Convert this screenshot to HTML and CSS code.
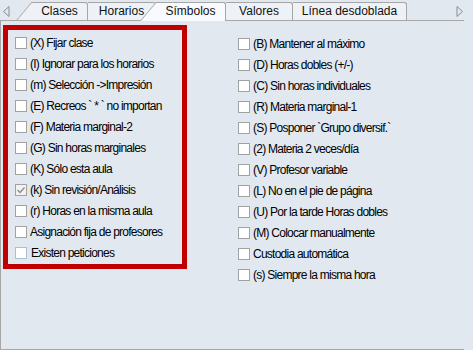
FILE: index.html
```html
<!DOCTYPE html>
<html>
<head>
	<title>Símbolos</title>
<link rel="stylesheet" href="styles.css">
</head>
<body>
	<div class="tabs">
		<span class="arrow arrow-left">
			<svg width="7" height="11"><polygon points="6,0.5 0.5,5.5 6,10.5" fill="none" stroke="#8c8c8c"/></svg>
		</span>
		<div class="tab tab-first tab-clases">Clases</div>
		<div class="tab tab-horarios">Horarios</div>
		<div class="tab tab-active tab-simbolos">Símbolos</div>
		<div class="tab tab-valores">Valores</div>
		<div class="tab tab-linea">Línea desdoblada</div>
		<span class="arrow arrow-right">
			<svg width="7" height="11"><polygon points="1,0.5 6.5,5.5 1,10.5" fill="none" stroke="#8c8c8c"/></svg>
		</span>
	</div>

	<div class="panel">
		<ul class="opts marked">
			<li><span class="box"></span>(X) Fijar clase</li>
			<li><span class="box"></span>(I) Ignorar para los horarios</li>
			<li><span class="box"></span>(m) Selección -&gt;Impresión</li>
			<li><span class="box"></span>(E) Recreos ` * ` no importan</li>
			<li><span class="box"></span>(F) Materia marginal-2</li>
			<li><span class="box"></span>(G) Sin horas marginales</li>
			<li><span class="box"></span>(K) Sólo esta aula</li>
			<li><span class="box checked"><svg width="10" height="10"><polyline points="1.5,5 4,7.5 8.5,2.5" fill="none" stroke="#8e8e8e" stroke-width="1.4"/></svg></span>(k) Sin revisión/Análisis</li>
			<li><span class="box"></span>(r) Horas en la misma aula</li>
			<li><span class="box"></span>Asignación fija de profesores</li>
			<li><span class="box hover"></span><span class="shift">Existen peticiones</span></li>
		</ul>
		<ul class="opts right">
			<li><span class="box"></span>(B) Mantener al máximo</li>
			<li><span class="box"></span>(D) Horas dobles (+/-)</li>
			<li><span class="box"></span>(C) Sin horas individuales</li>
			<li><span class="box"></span>(R) Materia marginal-1</li>
			<li><span class="box"></span>(S) Posponer `Grupo diversif.`</li>
			<li><span class="box"></span>(2) Materia 2 veces/día</li>
			<li><span class="box"></span>(V) Profesor variable</li>
			<li><span class="box"></span>(L) No en el pie de página</li>
			<li><span class="box"></span>(U) Por la tarde Horas dobles</li>
			<li><span class="box"></span>(M) Colocar manualmente</li>
			<li><span class="box"></span>Custodia automática</li>
			<li><span class="box"></span>(s) Siempre la misma hora</li>
		</ul>
	</div>
</body>
</html>
```

FILE: styles.css
```css
body{
	margin: 0;
	background-color: #e2e8f0;
	font-family: "Liberation Sans", Arial, sans-serif;
	color: #000;
}
.tabs{
	display: flex;
	align-items: flex-end;
	width: 464px;
	height: 21px;
	box-sizing: border-box;
	border-bottom: 1px solid #a6a6a6;
}
.arrow{
	display: flex;
	margin-bottom: 3px;
}
.arrow-left{
	margin-left: 3px;
}
.arrow-right{
	margin-left: auto;
	margin-right: 1px;
}
.tab{
	position: relative;
	z-index: 1;
	height: 18px;
	box-sizing: border-box;
	border-top: 1px solid #a6a6a6;
	border-right: 1px solid #a6a6a6;
	border-top-right-radius: 3px;
	background-color: #eef2f7;
	font-size: 12px;
	line-height: 17px;
	text-align: center;
	color: #111;
}
.tab-first{
	margin-left: 22px;
}
.tab-first::before,
.tab-active::before{
	content: "";
	position: absolute;
	top: -1px;
	bottom: 0;
	left: -8px;
	width: 16px;
	background: inherit;
	border-left: 1px solid #a6a6a6;
	border-top: 1px solid #a6a6a6;
	transform: skewX(-40deg);
	z-index: -1;
}
.tab-active{
	z-index: 2;
	height: 19px;
	margin-bottom: -1px;
	background-color: #f8fafd;
}
.tab-clases{ width: 56px; }
.tab-horarios{ width: 68px; }
.tab-simbolos{ width: 70px; }
.tab-valores{ width: 67px; }
.tab-linea{ width: 114px; }

.panel{
	display: flex;
	align-items: flex-start;
	width: 464px;
	height: 329px;
	box-sizing: border-box;
	border-left: 1px solid #a6a6a6;
	border-bottom: 1px solid #a6a6a6;
}
.opts{
	list-style: none;
	margin: 0;
	padding: 0;
	font-size: 12px;
	letter-spacing: -0.75px;
}
.opts li{
	display: flex;
	align-items: center;
	height: 21px;
	white-space: nowrap;
}
.marked{
	width: 184px;
	box-sizing: border-box;
	margin: 4px 0 0 2px;
	padding: 2px 0 1px 7px;
	border: 5px solid #c00000;
}
.right{
	margin-left: 51px;
	padding-top: 12px;
}
.box{
	display: flex;
	align-items: center;
	justify-content: center;
	width: 12px;
	height: 12px;
	box-sizing: border-box;
	margin-right: 3px;
	border: 1px solid #a2a2a2;
	background-color: #fff;
}
.checked{
	background-color: #f2f2f2;
}
.hover{
	border-color: #a9bedb;
}
.shift{
	margin-left: 1px;
}
```
